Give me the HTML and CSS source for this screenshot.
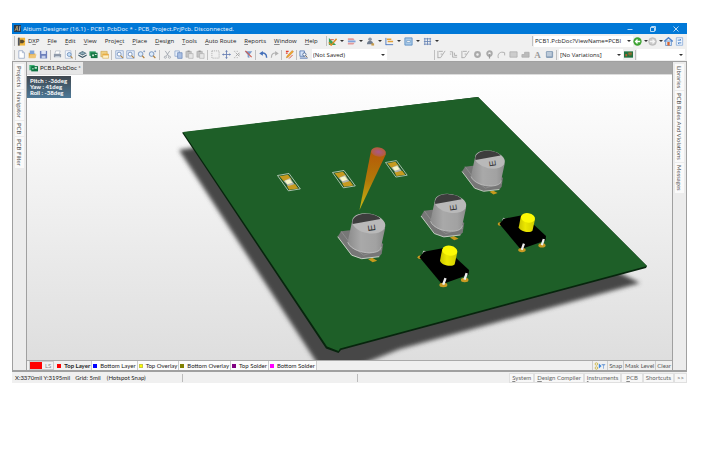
FILE: index.html
```
<!DOCTYPE html>
<html lang="en">
<head>
<meta charset="utf-8">
<title>Altium Designer (16.1)</title>
<link rel="stylesheet" href="styles.css">
</head>
<body>
<svg class="defs" aria-hidden="true">
  <defs>
    <symbol id="i-new" viewBox="0 0 10 10"><path d="M2 .8h4l2.200 2.200v6.200H2z" fill="#fff" stroke="#8da0c0" stroke-width=".8"/><path d="M6 .8V3h2.200" fill="none" stroke="#8da0c0" stroke-width=".7"/></symbol>
    <symbol id="i-open" viewBox="0 0 10 10"><path d="M.8 3h3l1 1h3.400v5H.8z" fill="#d9a648"/><path d="M2 .6h5v4H2z" fill="#7fa3d8"/><path d="M.8 9.200L2.500 5h7L8 9.200z" fill="#efc575"/></symbol>
    <symbol id="i-save" viewBox="0 0 10 10"><path d="M1 1h8v8.400H1z" fill="#6d7fbb"/><path d="M2.600 1h5v3.400h-5z" fill="#dfe6f6"/><path d="M3 6.400h4.200v3H3z" fill="#c4cfea"/></symbol>
    <symbol id="i-print" viewBox="0 0 10 10"><path d="M3 1h5L7 4.500H2z" fill="#fff" stroke="#9aa5b5" stroke-width=".6"/><path d="M1 4.500h8v3.600H1z" fill="#8d98a8"/><path d="M2.500 7h5v2h-5z" fill="#dfe4ea"/></symbol>
    <symbol id="i-preview" viewBox="0 0 10 10"><path d="M1.500.8h6.200v8.400H1.500z" fill="#f5f8fd" stroke="#9fb0ca" stroke-width=".7"/><circle cx="5.800" cy="5" r="2.200" fill="#c7e0f7" stroke="#5b7fae" stroke-width=".8"/><path d="M7.400 6.800l2 2.400" stroke="#b08950" stroke-width="1.300"/></symbol>
    <symbol id="i-layers" viewBox="0 0 10 10"><path d="M5 1l4.600 2.500L5 6 .4 3.500z" fill="#5c7888"/><path d="M.4 5L5 7.400 9.600 5v1.500L5 9 .4 6.500z" fill="#33505f"/><path d="M3 3.500h4" stroke="#b5d6e0"/></symbol>
    <symbol id="i-board" viewBox="0 0 10 10"><path d="M.5 1.500h7v5h-7z" fill="#2e9a60"/><path d="M2 3h7.500v6H2z" fill="#197645"/><path d="M3.500 5h2v2h-2zM6.500 4.500h2v1h-2z" fill="#d7f0df"/></symbol>
    <symbol id="i-window" viewBox="0 0 10 10"><path d="M1 1.500h7v6H1z" fill="#f2d183" stroke="#c49b40" stroke-width=".6"/><path d="M3 4.500h6.500v4.700H3z" fill="#fff2c8" stroke="#d1a446" stroke-width=".6"/><path d="M3 4.500h6.500V6H3z" fill="#e9a93c"/></symbol>
    <symbol id="i-zoomdoc" viewBox="0 0 10 10"><path d="M.8.8h8.400v8.400H.8z" fill="#e5eefa" stroke="#84a0c8" stroke-width=".8"/><circle cx="4.600" cy="4.600" r="2.200" fill="#fff" stroke="#5577a8" stroke-width=".8"/><path d="M6.200 6.200l2.600 2.600" stroke="#b3823d" stroke-width="1.300"/></symbol>
    <symbol id="i-zoom" viewBox="0 0 10 10"><circle cx="4" cy="4.500" r="2.600" fill="#dcebfa" stroke="#6887b5" stroke-width=".9"/><path d="M5.800 6.400l2.400 2.600" stroke="#b3823d" stroke-width="1.400"/><path d="M7 1.500h2M8 .5v2" stroke="#6887b5" stroke-width=".7"/></symbol>
    <symbol id="i-cut" viewBox="0 0 10 10"><path d="M2.500 1l4 6M7.500 1l-4 6" stroke="#9aa0a8" stroke-width=".9"/><circle cx="2.600" cy="8" r="1.200" fill="none" stroke="#9aa0a8" stroke-width=".8"/><circle cx="7.200" cy="8" r="1.200" fill="none" stroke="#9aa0a8" stroke-width=".8"/></symbol>
    <symbol id="i-copy" viewBox="0 0 10 10"><path d="M1 1h5v6H1z" fill="#e8effa" stroke="#7d97c4" stroke-width=".7"/><path d="M4 3h5v6.300H4z" fill="#a9bfe2" stroke="#5f7fb5" stroke-width=".7"/></symbol>
    <symbol id="i-paste" viewBox="0 0 10 10"><path d="M1 1.500h6v6.500H1z" fill="#c4c4c4" stroke="#a3a3a3" stroke-width=".6"/><path d="M2.800.6h2.400v1.600H2.800z" fill="#999"/><path d="M4 4h5v5.300H4z" fill="#e6e6e6" stroke="#a8a8a8" stroke-width=".6"/></symbol>
    <symbol id="i-marquee" viewBox="0 0 10 10"><path d="M1 1h8v8H1z" fill="none" stroke="#999" stroke-width=".8" stroke-dasharray="1.200 1"/></symbol>
    <symbol id="i-move" viewBox="0 0 10 10"><path d="M5 .8v8.400M.8 5h8.400" stroke="#6c82b5"/><path d="M5 0l1.500 2h-3zM5 10l1.500-2h-3zM0 5l2-1.500v3zM10 5L8 3.500v3z" fill="#6c82b5"/></symbol>
    <symbol id="i-deselect" viewBox="0 0 10 10"><path d="M1 1.500h1.500M4 1.500h1.500M1 8.500h1.500M4 8.500h1.500M7 4v2" stroke="#aaa" stroke-width=".8"/><path d="M3 3l4 4M7 3L3 7" stroke="#a5a5a5"/></symbol>
    <symbol id="i-clear" viewBox="0 0 10 10"><path d="M.8 1.500h8.400L6 5.200V9L4 8V5.200z" fill="#7d9ccb"/><path d="M1.500 1l7 7" stroke="#cf5a4c" stroke-width="1.200"/></symbol>
    <symbol id="i-undo" viewBox="0 0 10 10"><path d="M2 4c3.500-1.600 6.500 0 6.500 4.500" fill="none" stroke="#4470ba" stroke-width="1.600"/><path d="M.3 4l4-3v5.400z" fill="#4470ba"/></symbol>
    <symbol id="i-redo" viewBox="0 0 10 10"><path d="M8 4C4.500 2.400 1.500 4 1.500 8.500" fill="none" stroke="#b2b2b2" stroke-width="1.300"/><path d="M9.700 4l-4-3v5.400z" fill="#b2b2b2"/></symbol>
    <symbol id="i-probe" viewBox="0 0 10 10"><path d="M1 1.500h3M1 3.500h2" stroke="#e23c2c" stroke-width="1.200"/><path d="M8 .5L9.500 2 3.500 8l-2 .8.6-2z" fill="#f0a52d" stroke="#b46a1a" stroke-width=".4"/><path d="M4.500 9.500l4-4" stroke="#d8452e"/></symbol>
    <symbol id="i-find" viewBox="0 0 10 10"><path d="M1 1h5v6H1z" fill="#d5e3f8" stroke="#4068ac" stroke-width=".8"/><path d="M1 9h8.500" stroke="#4068ac"/><circle cx="6" cy="5" r="1.800" fill="#fff" stroke="#304f82" stroke-width=".8"/><path d="M7.200 6.200l2 2" stroke="#7d5930"/></symbol>
    <symbol id="i-route" viewBox="0 0 10 10"><path d="M1 1v8M1 8.500h3l5-7.500M2 1.500h4.500M4 4.500h2" fill="none" stroke="#aaa"/></symbol>
    <symbol id="i-diff" viewBox="0 0 10 10"><path d="M1 2h3v6h5M1 4.500h1.500M6 3v3h3" fill="none" stroke="#aaa"/></symbol>
    <symbol id="i-pad" viewBox="0 0 10 10"><circle cx="5" cy="5" r="2.600" fill="none" stroke="#aaa" stroke-width="2.400"/></symbol>
    <symbol id="i-via" viewBox="0 0 10 10"><circle cx="5" cy="4" r="2.500" fill="none" stroke="#aaa" stroke-width="2.200"/><path d="M5 4.500v5" stroke="#999" stroke-width="1.400"/></symbol>
    <symbol id="i-arc" viewBox="0 0 10 10"><path d="M1.500 9C0 4.500 3.500 1 8.500 3v3" fill="none" stroke="#aaa"/></symbol>
    <symbol id="i-fill" viewBox="0 0 10 10"><path d="M1 2h8v6H1z" fill="#ccc" stroke="#aaa" stroke-width=".8"/></symbol>
    <symbol id="i-poly" viewBox="0 0 10 10"><path d="M1 8V5h3V2.500h5V8z" fill="#bbb" stroke="#aaa" stroke-width=".8"/></symbol>
    <symbol id="i-text" viewBox="0 0 10 10"><text x="1.500" y="9" class="glyph-a">A</text></symbol>
    <symbol id="i-comp" viewBox="0 0 10 10"><rect x="1" y="1" width="8" height="8" rx="1.500" fill="#8aa0b8"/><path d="M2 2h5.500v5H2z" fill="#bccad9"/></symbol>
    <symbol id="i-dxp" viewBox="0 0 10 10"><path d="M1 .8h8v8.700H1z" fill="#efb53c"/><path d="M1 .8h2v8.700H1z" fill="#4f5562"/><path d="M3.500 3h3l2 2-2 2h-3z" fill="#584a2e"/></symbol>
    <symbol id="i-wire" viewBox="0 0 10 10"><path d="M1 1v8h8z" fill="#37a35a"/><path d="M1 6l2.500 3L9.500 2" fill="none" stroke="#dd8c27" stroke-width="1.600"/><path d="M2.500 3h4" stroke="#d04e35"/></symbol>
    <symbol id="i-align" viewBox="0 0 10 10"><path d="M1 1.500h6l1.500 2H1z" fill="#e39a9a"/><path d="M1 3.900h8.500v2H1z" fill="#7fa3dc"/><path d="M1 6.400h7.500l-1.500 2H1z" fill="#e39a9a"/></symbol>
    <symbol id="i-people" viewBox="0 0 10 10"><circle cx="4.500" cy="2.500" r="2" fill="#8a94a3"/><path d="M1 8c0-5 7-5 7 0z" fill="#707d90"/><path d="M6 7h3v2.500H6z" fill="#c99c49"/></symbol>
    <symbol id="i-dim" viewBox="0 0 10 10"><path d="M1 1v8M1 8.500h8" stroke="#4a76bd"/><path d="M2 2.500h5M3 5h6" stroke="#e3a139" stroke-width="1.600"/></symbol>
    <symbol id="i-room" viewBox="0 0 10 10"><path d="M1 1h8v8H1z" fill="#a8cae9" stroke="#5d91c5"/><path d="M3 4h4v2H3z" fill="#fff" stroke="#5786b5" stroke-width=".6"/></symbol>
    <symbol id="i-grid" viewBox="0 0 10 10"><path d="M2 1v8M5 1v8M8 1v8M1 2h8M1 5h8M1 8h8" stroke="#6482b4" stroke-width=".9"/></symbol>
    <symbol id="i-back" viewBox="0 0 10 10"><circle cx="5" cy="5" r="4.600" fill="#3fa434"/><path d="M8 5H3M5 2.800L2.800 5 5 7.200" fill="none" stroke="#fff" stroke-width="1.400"/></symbol>
    <symbol id="i-fwd" viewBox="0 0 10 10"><circle cx="5" cy="5" r="4.300" fill="#c9c9c9" stroke="#aaa" stroke-width=".6"/><path d="M2 5h5M5 2.800L7.200 5 5 7.200" fill="none" stroke="#f4f4f4" stroke-width="1.400"/></symbol>
    <symbol id="i-home" viewBox="0 0 10 10"><path d="M1.800 4.500h6.400v5H1.800z" fill="#dce9fb" stroke="#5d8cc9" stroke-width=".9"/><path d="M.3 5L5 .8 9.700 5" fill="none" stroke="#4d82cb" stroke-width="1.500"/><path d="M3.700 5.500h2.600v4H3.700z" fill="#d9642c"/></symbol>
    <symbol id="i-page" viewBox="0 0 10 10"><path d="M1.500.8h7v8.400h-7z" fill="#eef5fe" stroke="#6f9bd2" stroke-width=".7"/><path d="M3 3.500h3.500L5.500 2.200M7 6.500H3.500L4.500 8" fill="none" stroke="#2e6fc0" stroke-width=".9"/></symbol>
    <symbol id="i-pcb" viewBox="0 0 10 10"><path d="M0 1.500h10v7H0z" fill="#1f7442"/><path d="M1.500 4.500h2v2.500h-2z" fill="#bb5b2a"/><path d="M5 3h3.500v2H5zM5.500 6.200h3" fill="#9a6b32" stroke="#9a6b32" stroke-width=".5"/></symbol>
    <symbol id="i-doc" viewBox="0 0 12 10"><path d="M.5 1h7v7h-7z" fill="#3fae73"/><path d="M3 2.500h9v7H3z" fill="#0c7440"/><path d="M7.500 3.500h3v2.500h-3zM4.500 5h1.500v2H4.500z" fill="#c4ead2"/></symbol>
    <symbol id="i-logo" viewBox="0 0 10 10"><path d="M0 0h10v10H0z" fill="#26394f"/><path d="M1.200 8.500L4.500 1.500 5.500 8.500M2.500 6h3" fill="none" stroke="#d5b36a"/><path d="M8.500 1.500L7.500 8.500" stroke="#dce5ef"/></symbol>
    <symbol id="i-filter" viewBox="0 0 14 10"><circle cx="2.500" cy="2.500" r="1.600" fill="none" stroke="#c9b33a"/><circle cx="2.500" cy="7.500" r="1.600" fill="none" stroke="#c9b33a"/><path d="M5.500 2L9 5 5.500 8z" fill="#3d88df"/><path d="M8.500 2.500H14L12 5v3.500h-1V5z" fill="#7da4d8"/></symbol>
  </defs>
</svg>

<div class="app">
  <header class="titlebar">
    <svg class="logo"><use href="#i-logo"/></svg>
    <span class="title">Altium Designer (16.1) - PCB1.PcbDoc * - PCB_Project.PrjPcb. Disconnected.</span>
    <div class="window-buttons">
      <button aria-label="Minimize"><svg viewBox="0 0 6 6"><path d="M.5 3.500h5"/></svg></button>
      <button aria-label="Restore"><svg viewBox="0 0 6 6"><path d="M.5 1.500h4v4h-4zM1.500 1.500v-1h4v4h-1"/></svg></button>
      <button aria-label="Close"><svg viewBox="0 0 6 6"><path d="M.5.5l5 5M5.500.5l-5 5"/></svg></button>
    </div>
  </header>

  <div class="bar">
    <i class="sep"></i>
    <button class="icon" aria-label="DXP menu"><svg><use href="#i-dxp"/></svg></button>
    <nav class="menu">
      <button>D<u>X</u>P</button><button><u>F</u>ile</button><button><u>E</u>dit</button><button><u>V</u>iew</button><button>Proje<u>c</u>t</button><button><u>P</u>lace</button><button><u>D</u>esign</button><button><u>T</u>ools</button><button><u>A</u>uto Route</button><button><u>R</u>eports</button><button><u>W</u>indow</button><button><u>H</u>elp</button>
    </nav>
    <i class="sep"></i>
    <div class="drops">
      <button class="drop" aria-label="Wiring"><svg><use href="#i-wire"/></svg></button>
      <button class="drop" aria-label="Align"><svg><use href="#i-align"/></svg></button>
      <button class="drop" aria-label="Find selections"><svg><use href="#i-people"/></svg></button>
      <button class="drop" aria-label="Dimensions"><svg><use href="#i-dim"/></svg></button>
      <button class="drop" aria-label="Rooms"><svg><use href="#i-room"/></svg></button>
      <button class="drop" aria-label="Grids"><svg><use href="#i-grid"/></svg></button>
    </div>
    <div class="nav-tools">
      <i class="sep"></i>
      <select class="address" aria-label="Address"><option>PCB1.PcbDoc?ViewName=PCBI</option></select>
      <button class="drop tight" aria-label="Back"><svg><use href="#i-back"/></svg></button>
      <button class="drop tight" aria-label="Forward"><svg><use href="#i-fwd"/></svg></button>
      <button class="icon" aria-label="Home"><svg><use href="#i-home"/></svg></button>
      <button class="icon" aria-label="Favorites"><svg><use href="#i-page"/></svg></button>
    </div>
  </div>

  <div class="bar tools">
    <i class="sep"></i>
    <div class="group">
      <button class="icon" aria-label="New"><svg><use href="#i-new"/></svg></button>
      <button class="icon" aria-label="Open"><svg><use href="#i-open"/></svg></button>
      <button class="icon" aria-label="Save"><svg><use href="#i-save"/></svg></button>
    </div>
    <i class="sep"></i>
    <div class="group">
      <button class="icon" aria-label="Print"><svg><use href="#i-print"/></svg></button>
      <button class="icon" aria-label="Print preview"><svg><use href="#i-preview"/></svg></button>
    </div>
    <i class="sep"></i>
    <div class="group">
      <button class="icon" aria-label="Layers"><svg><use href="#i-layers"/></svg></button>
      <button class="icon" aria-label="Board"><svg><use href="#i-board"/></svg></button>
      <button class="icon" aria-label="Workspace"><svg><use href="#i-window"/></svg></button>
    </div>
    <i class="sep wide"></i>
    <div class="group">
      <button class="icon" aria-label="Fit document"><svg><use href="#i-zoomdoc"/></svg></button>
      <button class="icon" aria-label="Zoom area"><svg><use href="#i-zoomdoc"/></svg></button>
      <button class="icon" aria-label="Zoom selected"><svg><use href="#i-zoom"/></svg></button>
      <button class="icon" aria-label="Zoom filtered"><svg><use href="#i-zoom"/></svg></button>
    </div>
    <i class="sep wide"></i>
    <div class="group">
      <button class="icon" aria-label="Cut"><svg><use href="#i-cut"/></svg></button>
      <button class="icon" aria-label="Copy"><svg><use href="#i-copy"/></svg></button>
      <button class="icon" aria-label="Paste"><svg><use href="#i-paste"/></svg></button>
      <button class="icon" aria-label="Rubber stamp"><svg><use href="#i-paste"/></svg></button>
    </div>
    <i class="sep wide"></i>
    <div class="group">
      <button class="icon" aria-label="Select"><svg><use href="#i-marquee"/></svg></button>
      <button class="icon" aria-label="Move"><svg><use href="#i-move"/></svg></button>
      <button class="icon" aria-label="Deselect"><svg><use href="#i-deselect"/></svg></button>
      <button class="icon" aria-label="Clear filter"><svg><use href="#i-clear"/></svg></button>
    </div>
    <i class="sep wide"></i>
    <div class="group">
      <button class="icon" aria-label="Undo"><svg><use href="#i-undo"/></svg></button>
      <button class="icon" aria-label="Redo"><svg><use href="#i-redo"/></svg></button>
    </div>
    <i class="sep wide"></i>
    <button class="icon" aria-label="Cross probe"><svg><use href="#i-probe"/></svg></button>
    <i class="sep"></i>
    <button class="icon" aria-label="Browse"><svg><use href="#i-find"/></svg></button>
    <select class="view" aria-label="View configuration"><option>(Not Saved)</option></select>
    <div class="place-tools">
      <i class="sep"></i>
      <div class="group spaced">
        <button class="icon" aria-label="Route"><svg><use href="#i-route"/></svg></button>
        <button class="icon" aria-label="Differential pair"><svg><use href="#i-diff"/></svg></button>
        <button class="icon" aria-label="Multi route"><svg><use href="#i-route"/></svg></button>
        <button class="icon" aria-label="Pad"><svg><use href="#i-pad"/></svg></button>
        <button class="icon" aria-label="Via"><svg><use href="#i-via"/></svg></button>
        <button class="icon" aria-label="Arc"><svg><use href="#i-arc"/></svg></button>
        <button class="icon" aria-label="Fill"><svg><use href="#i-fill"/></svg></button>
        <button class="icon" aria-label="Polygon"><svg><use href="#i-poly"/></svg></button>
        <button class="icon" aria-label="String"><svg><use href="#i-text"/></svg></button>
        <button class="icon" aria-label="Component"><svg><use href="#i-comp"/></svg></button>
      </div>
      <i class="sep wide"></i>
      <select class="variant" aria-label="Variant"><option>[No Variations]</option></select>
      <button class="icon" aria-label="Variant board"><svg><use href="#i-pcb"/></svg></button>
      <i class="sep"></i>
      <select class="extra" aria-label="Filter"><option></option></select>
    </div>
  </div>

  <div class="workspace">
    <nav class="side left">
      <button>Projects</button><button>Navigator</button><button>PCB</button><button>PCB Filter</button>
    </nav>
    <main class="editor">
      <div class="tabs"><button class="tab"><svg><use href="#i-doc"/></svg>PCB1.PcbDoc *</button></div>
      <div class="canvas">
        <svg class="scene" viewBox="27 75 645 285" preserveAspectRatio="xMidYMid slice" role="img" aria-label="3D board view">
          <defs>
            <linearGradient id="bg" x2="0" y2="1"><stop offset="0" stop-color="#fff"/><stop offset="1" stop-color="#dedede"/></linearGradient>
            <linearGradient id="cone" x1="0" y1="152" x2="0" y2="210" gradientUnits="userSpaceOnUse"><stop offset="0" stop-color="#b65a08"/><stop offset=".5" stop-color="#b17a09"/><stop offset="1" stop-color="#c8b814"/></linearGradient>
            <radialGradient id="conetop"><stop offset="0" stop-color="#a8598a"/><stop offset="1" stop-color="#b65d38"/></radialGradient>
            <linearGradient id="metal"><stop offset="0" stop-color="#8b8b8b"/><stop offset=".35" stop-color="#a9a9a9"/><stop offset=".75" stop-color="#a2a2a2"/><stop offset="1" stop-color="#8c8c8c"/></linearGradient>
            <linearGradient id="knob"><stop offset="0" stop-color="#c9c400"/><stop offset=".4" stop-color="#ece800"/><stop offset="1" stop-color="#d2ce00"/></linearGradient>
            <filter id="soft" x="-10%" y="-10%" width="120%" height="120%"><feGaussianBlur stdDeviation="2"/></filter>
            <g id="led">
              <path d="M0 0L11.500-2 22.800 13.400 10.900 15.300z" fill="#1b5626" stroke="#e9efe6" stroke-width=".7"/>
              <path d="M2 .7L10.500-.8 14.200 4 6 5.600z" fill="#c69a20"/>
              <path d="M9.300 10.100L17.500 8.600 20.800 13 11.500 14.300z" fill="#c69a20"/>
              <path d="M6 5.500L12.500 2.500 17 8.800 10.500 10.500z" fill="#b5b5ae"/>
              <path d="M7.300 5.200L12.300 3.700 14.800 7.200 10 8.700z" fill="#f8f6c6"/>
            </g>
            <g id="cap">
              <path d="M30.500 22.500l4-1.500 5 3-4.500 1.600z" fill="#c69a1c"/>
              <path d="M0 0L3.400-5.400 12-6.500 45.500 7 44 17 41.500 20 24 22 14 18.500z" fill="#777"/>
              <path d="M0 0L14 18.500 24 22 41.500 20" fill="none" stroke="#d5dcd2" stroke-width=".9"/>
              <path d="M3.400-5.400L15 10 26 18.500 44 13" fill="none" stroke="#929292" stroke-width=".8"/>
              <path d="M14.300-15L10 5C11 12 22 16 31 16c7 0 12.400-2 12.400-6L47.500-9z" fill="url(#metal)"/>
              <path d="M10 5.500C13 13 25 16.500 32 16c7 0 11-2 11.600-6" fill="none" stroke="#c3c3c3" stroke-width=".8"/>
              <ellipse cx="31" cy="-13.300" rx="16.800" ry="9.800" transform="rotate(11 31 -13.300)" fill="#b9b9b9"/>
              <path d="M15-12.700C13.500-18 19-23.500 29-23c7 .2 12 2.500 13.800 5.300z" fill="#3d3d3d"/>
              <text x="31" y="-5" class="cap-mark" transform="rotate(-98 34 -8.500)">E</text>
            </g>
            <g id="switch">
              <ellipse cx="1" cy=".5" rx="2.400" ry="1.800" fill="#c89a23"/>
              <path d="M3.500-2l1.200-3.500 2 .5" fill="none" stroke="#dfe6df" stroke-width="1"/>
              <path d="M.5.500L5-5 26-9 50 13.300 49.500 18 23 27.500z" fill="#000"/>
              <ellipse cx="24.400" cy="28.300" rx="4" ry="2.200" fill="#c89a23"/>
              <ellipse cx="45.700" cy="23.300" rx="3.800" ry="2.200" fill="#c89a23"/>
              <path d="M26.500 21.500L24.200 28M47.700 16.500L45.500 23" stroke="#eee" stroke-width="2.400"/>
              <path d="M23.200-7.500L21 4c1 4.500 12 7 14.700 3.500L38.300-4.500z" fill="url(#knob)"/>
              <ellipse cx="30.800" cy="-6" rx="7.600" ry="5" transform="rotate(10 30.800 -6)" fill="#fcfa05"/>
            </g>
          </defs>
          <rect x="-373" y="75" width="1445" height="285" fill="url(#bg)"/>
          <path d="M179 150L300 130 610 268 640 283 400 349 362 364 345 380 328 380z" fill="#464646" filter="url(#soft)"/>
          <path d="M182 132.500L478 97 647 266 646 268 341 350 338.500 353 326 348.500z" fill="#07250d"/>
          <path d="M183 132L478 97 647 266 340 348.500 338.500 351 327 346.500z" fill="#1e5f28"/>
          <use href="#led" x="277.500" y="175.500"/>
          <use href="#led" x="332.500" y="172.500"/>
          <use href="#led" transform="translate(385.500 162.500) scale(.95)"/>
          <path d="M371 151L359.500 210 386 154z" fill="url(#cone)"/>
          <ellipse cx="378.500" cy="152" rx="7.500" ry="4.500" transform="rotate(10 378.500 152)" fill="url(#conetop)"/>
          <use href="#cap" transform="translate(462 171.500) scale(.9)"/>
          <use href="#cap" transform="translate(421 216) scale(.95)"/>
          <use href="#cap" transform="translate(337.700 236.700)"/>
          <use href="#switch" transform="translate(499 223.500) scale(.94)"/>
          <use href="#switch" transform="translate(419 256.700)"/>
        </svg>
        <div class="orientation"><div>Pitch : -36deg</div><div>Yaw : 41deg</div><div>Roll : -38deg</div></div>
      </div>
      <div class="layers">
        <button class="layer-set"><i></i>LS</button>
        <div class="layer-list">
          <button class="layer current"><i class="top"></i>Top Layer</button>
          <button class="layer"><i class="bottom"></i>Bottom Layer</button>
          <button class="layer"><i class="top-overlay"></i>Top Overlay</button>
          <button class="layer"><i class="bottom-overlay"></i>Bottom Overlay</button>
          <button class="layer"><i class="top-solder"></i>Top Solder</button>
          <button class="layer"><i class="bottom-solder"></i>Bottom Solder</button>
        </div>
        <div class="mask">
          <button aria-label="Filter"><svg><use href="#i-filter"/></svg></button><button>Snap</button><button>Mask Level</button><button>Clear</button>
        </div>
      </div>
    </main>
    <nav class="side right">
      <button>Libraries</button><button>PCB Rules And Violations</button><button>Messages</button>
    </nav>
  </div>

  <footer class="status">
    <span class="info"><span>X:3370mil Y:3195mil</span><span>Grid: 5mil</span><span class="snap">(Hotspot Snap)</span></span>
    <span class="message"></span>
    <div class="panels">
      <button><u>S</u>ystem</button><button><u>D</u>esign Compiler</button><button><u>I</u>nstruments</button><button class="roomy"><u>P</u>CB</button><button>Shortcuts</button><button>&gt;&gt;</button>
    </div>
  </footer>
</div>
</body>
</html>
```
FILE: styles.css
```
* { box-sizing: border-box; }

body {
  margin: 0;
  padding: 23px 35px 0 12px;
  background: #fff;
  color: #222;
  font: 6px/8px "Open Sans", "Noto Sans", sans-serif;
}

button, select {
  margin: 0;
  padding: 0;
  border: 0;
  border-radius: 0;
  background: none;
  color: inherit;
  font: inherit;
  white-space: nowrap;
}

svg { display: block; }
u { text-underline-offset: 1px; text-decoration-thickness: 1px; text-decoration-color: #888; }

.defs { position: absolute; width: 0; height: 0; }
.glyph-a { font: bold 10px "Liberation Serif", serif; fill: #999; }
.cap-mark { font: 10px "Liberation Sans", sans-serif; fill: #333; }

.app { background: #f0f0f0; }

/* Title bar */
.titlebar {
  display: flex;
  align-items: center;
  height: 11px;
  padding-left: 2px;
  background: #0078d7;
  color: #e4f1fc;
  font-family: "Noto Sans", sans-serif;
}
.logo { width: 7px; height: 7px; margin-right: 2px; }
.window-buttons { display: flex; margin-left: auto; }
.window-buttons button { width: 23px; height: 11px; display: grid; place-items: center; }
.window-buttons svg { width: 6px; height: 6px; fill: none; stroke: #b5d8f5; stroke-width: 1px; }

/* Menu and tool bars */
.bar { display: flex; align-items: center; height: 14px; padding: 0 2px 0 1px; }
.tools { height: 13px; }
.sep { flex: none; width: 1px; height: 10px; margin: 0 1px; background: #c0c0c0; }
.sep.wide { margin-right: 2px; }
.icon { flex: none; display: grid; place-items: center; width: 11px; height: 11px; }
.icon svg { width: 9px; height: 9px; }
.group { display: flex; }
.group.spaced { gap: 1px; }
.menu { display: flex; gap: 8px; margin: 0 7px 0 1px; }
.drops { display: flex; gap: 1px; }
.drop { display: flex; align-items: center; gap: 3px; width: 18px; height: 11px; }
.drop svg { width: 9px; height: 9px; }
.drop::after { content: ""; border: 2px solid transparent; border-top-color: #333; border-bottom: 0; }
.drop.tight { width: 15px; gap: 2px; }

select {
  appearance: none;
  height: 11px;
  padding: 0 8px 0 1px;
  background: #fff url("data:image/svg+xml,%3Csvg xmlns='http://www.w3.org/2000/svg' viewBox='0 0 4 2'%3E%3Cpath d='M0 0h4L2 2z' fill='%23333'/%3E%3C/svg%3E") no-repeat right 2px center / 4px 2px;
}
.nav-tools, .place-tools { display: flex; align-items: center; margin-left: auto; }
.address { width: 99px; }
.view { width: 75px; margin-left: 3px; }
.variant { width: 64px; }
.extra { width: 48px; }

/* Docking area */
.workspace { display: flex; border: solid #a0a0a0; border-width: 1px 1px 2px; font-family: Lato, "Open Sans", sans-serif; }
.side { display: flex; flex-direction: column; flex: none; gap: 1px; width: 14px; padding: 2px 2px; background: #ececec; color: #555; }
.side.left { border-right: 1px solid #a0a0a0; }
.side.right { border-left: 1px solid #a0a0a0; }
.side button { writing-mode: vertical-rl; padding: 2px 0; width: 9px; background: #fafafa; line-height: 9px; text-align: left; }
.editor { flex: 1; min-width: 0; }
.tabs { display: flex; height: 13px; background: #a8a8a8; border-bottom: 1px solid #dcdcdc; }
.tab { display: flex; align-items: center; gap: 2px; padding: 0 2px; background: #e6e6e6; }
.tab svg { width: 9px; height: 8px; }

.canvas { position: relative; }
.scene { width: 100%; height: auto; }
.orientation {
  position: absolute;
  top: 1px;
  left: 0;
  padding: 2px 4px 2px 3px;
  background: linear-gradient(#40474e, #4c7897);
  color: #fff;
  font-weight: bold;
  line-height: 6px;
}

.layers { display: flex; align-items: center; height: 10px; border-top: 1px solid #aaa; }
.layer-set { display: flex; margin-left: 2px; padding-right: 2px; border: 1px solid #ccc; color: #888; line-height: 7px; }
.layer-set i { width: 12px; margin-right: 3px; background: #f00; }
.layer-list { display: flex; margin-left: 2px; }
.layer { display: flex; align-items: center; gap: 3px; padding: 0 1px; border-right: 1px solid #ccc; background: #fcfcfc; line-height: 9px; }
.layer.current { background: #f0f0f0; font-weight: bold; }
.layer i { width: 4px; height: 4px; }
.top { background: #f00; }
.bottom { background: #00f; }
.top-overlay { background: #ff0; border: 1px solid #c8c840; }
.bottom-overlay { background: #808000; }
.top-solder { background: #800080; }
.bottom-solder { background: #f0f; }
.mask { display: flex; margin-left: auto; color: #555; }
.mask button { padding: 0 1px; border-left: 1px solid #ccc; line-height: 9px; }
.mask svg { width: 12px; height: 8px; }

/* Status bar */
.status { display: flex; align-items: center; height: 11px; padding-left: 3px; font-family: Lato, "Open Sans", sans-serif; }
.info { display: flex; flex: 0 0 25%; gap: 5px; border-right: 1px solid #bbb; }
.snap { margin-left: 1px; }
.message { flex: 0 0 26%; height: 8px; border-right: 1px solid #bbb; }
.panels { display: flex; margin-left: auto; color: #666; }
.panels button { padding: 0 2px; border: 1px solid #e0e0e0; background: #f7f7f7; }
.panels .roomy { padding: 0 4px; }
```
